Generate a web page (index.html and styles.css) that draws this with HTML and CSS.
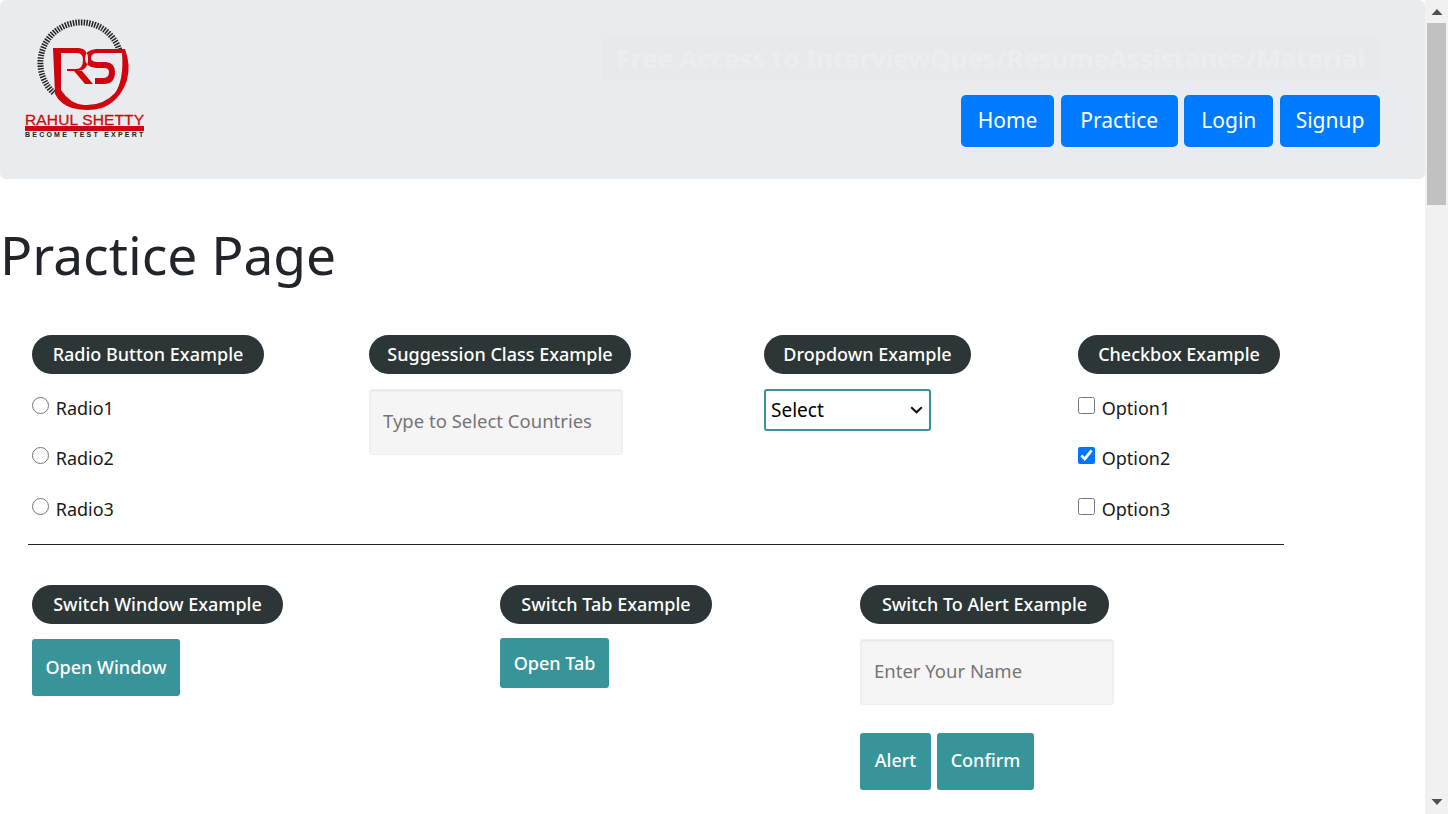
FILE: index.html
```html
<!DOCTYPE html>
<html lang="en">
<head>
  <meta charset="UTF-8">
  <meta name="viewport" content="width=device-width, initial-scale=1.0">
  <title>Practice Page</title>
  <link rel="stylesheet" href="styles.css">
</head>
<body>
  <div class="page">
    <main class="content">
      <header class="jumbotron">
        <div class="logo">
          <svg class="logo-mark" width="120" height="95" viewBox="25 18 120 95">
            <path class="logo-ticks" d="M53.7 92.9A40.5 40.5 0 1 1 119.3 50"/>
            <path class="logo-shield" d="M53 48H79Q88 49 88 59Q88 71 77 71H67V69H76Q83 69 83 60Q83 53 77 53H61V90Q70 104 84 105Q103 106 115 93Q124 80 122 53H98Q91 53 91 58Q91 62 98 62H106Q115 63 115 72Q115 84 104 84H95V78H103Q109 78 109 72Q109 68 104 68H96Q85 67 85 58Q85 50 96 49L125 49Q131 65 127 80Q120 101 102 108Q88 112 72 108Q60 104 55 94Z"/>
            <path class="logo-shield" d="M74 71H82L93 84H85Z"/>
          </svg>
          <div class="logo-name">RAHUL SHETTY</div>
          <div class="logo-bar">ACADEMY</div>
          <div class="logo-tag">BECOME TEST EXPERT</div>
        </div>
        <div class="header-right">
          <div class="promo"><a class="promo-link" href="#">Free Access to InterviewQues/ResumeAssistance/Material</a></div>
          <nav class="nav">
            <a class="nav-btn" href="#">Home</a>
            <a class="nav-btn" href="#">Practice</a>
            <a class="nav-btn" href="#">Login</a>
            <a class="nav-btn" href="#">Signup</a>
          </nav>
        </div>
      </header>

      <h1 class="title">Practice Page</h1>

      <section class="row row-top">
        <div class="col col-radio">
          <div class="legend">Radio Button Example</div>
          <label class="opt"><input type="radio" name="radio"> Radio1</label>
          <label class="opt"><input type="radio" name="radio"> Radio2</label>
          <label class="opt"><input type="radio" name="radio"> Radio3</label>
        </div>
        <div class="col col-suggest">
          <div class="legend">Suggession Class Example</div>
          <input class="field" type="text" placeholder="Type to Select Countries">
        </div>
        <div class="col col-drop">
          <div class="legend">Dropdown Example</div>
          <select class="drop"><option>Select</option></select>
        </div>
        <div class="col col-check">
          <div class="legend">Checkbox Example</div>
          <label class="opt"><input type="checkbox"> Option1</label>
          <label class="opt"><input type="checkbox" checked> Option2</label>
          <label class="opt"><input type="checkbox"> Option3</label>
        </div>
      </section>

      <hr class="rule">

      <section class="row row-bottom">
        <div class="col col-window">
          <div class="legend">Switch Window Example</div>
          <button class="btn btn-window">Open Window</button>
        </div>
        <div class="col col-tab">
          <div class="legend">Switch Tab Example</div>
          <button class="btn btn-tab">Open Tab</button>
        </div>
        <div class="col col-alert">
          <div class="legend">Switch To Alert Example</div>
          <input class="field" type="text" placeholder="Enter Your Name">
          <div class="btn-row">
            <button class="btn btn-alert">Alert</button>
            <button class="btn btn-confirm">Confirm</button>
          </div>
        </div>
      </section>
    </main>

    <div class="scrollbar">
      <svg class="arrow" width="23" height="17" viewBox="0 0 23 17"><path d="M12 9L17.5 15H6.5Z"/></svg>
      <div class="track"><div class="thumb"></div></div>
      <svg class="arrow" width="23" height="17" viewBox="0 0 23 17"><path d="M12 8L6.5 2H17.5Z"/></svg>
    </div>
  </div>
</body>
</html>
```

FILE: styles.css
```css
* {
  box-sizing: border-box;
}
html, body {
  margin: 0;
  height: 100%;
  overflow: hidden;
}
body {
  font-family: "Noto Sans", "Open Sans", sans-serif;
  font-size: 18px;
  color: #212529;
  background: #fff;
}
.page {
  display: flex;
  height: 814px;
}
.content {
  width: 1425px;
  flex: none;
}
.jumbotron {
  height: 179px;
  background: #e9ecef;
  border-radius: 6px;
  display: flex;
  justify-content: space-between;
  padding: 18px 45px 0 25px;
}
.logo {
  width: 120px;
}
.logo-mark {
  display: block;
}
.logo-ticks {
  fill: none;
  stroke: #222;
  stroke-width: 6;
  stroke-dasharray: 1.5 1.2;
}
.logo-shield {
  fill: #d0030f;
  fill-rule: evenodd;
}
.logo-name {
  height: 13px;
  font-family: "Liberation Sans", sans-serif;
  font-size: 15.5px;
  line-height: 13px;
  letter-spacing: .15px;
  color: #cf0a10;
  white-space: nowrap;
  -webkit-text-stroke: .3px #cf0a10;
}
.logo-bar {
  width: 119px;
  height: 5px;
  background: #d0030f;
  font-size: 4px;
  line-height: 5px;
  letter-spacing: 1px;
  text-align: center;
  color: #7a2a2a;
}
.logo-tag {
  margin-top: 1px;
  font-family: "Liberation Sans", sans-serif;
  font-size: 7px;
  font-weight: 700;
  line-height: 6px;
  letter-spacing: 2.22px;
  color: #222;
  white-space: nowrap;
}
.header-right {
  display: flex;
  flex-direction: column;
  align-items: flex-end;
  padding-top: 20px;
}
.promo {
  width: 778px;
  height: 42px;
  background: #e7eaed;
  line-height: 40px;
  text-align: center;
  white-space: nowrap;
  overflow: hidden;
}
.promo-link {
  color: #ebeef1;
  font-size: 25.8px;
  font-weight: 700;
  text-decoration-thickness: 1px;
  text-decoration-color: #e9ecef;
}
.nav {
  display: grid;
  grid-template-columns: 93px 117px 89px 100px;
  gap: 6.67px;
  margin-top: 15px;
}
.nav-btn {
  height: 52px;
  background: #007bff;
  color: #fff;
  font-size: 21px;
  line-height: 50px;
  text-align: center;
  border-radius: 5px;
  text-decoration: none;
}
.title {
  margin: 43px 0 0;
  height: 113px;
  font-size: 53.3px;
  font-weight: 400;
  line-height: 66px;
  color: #212529;
}
.row {
  display: flex;
  padding-left: 32px;
}
.row-top {
  height: 209px;
}
.row-bottom {
  padding-top: 40px;
}
.col-radio { width: 337px; }
.col-suggest { width: 395px; }
.col-drop { width: 314px; }
.col-window { width: 468px; }
.col-tab { width: 360px; }
.legend {
  display: block;
  height: 39px;
  background: #2c3636;
  color: #fff;
  font-size: 18px;
  font-weight: 500;
  line-height: 38px;
  text-align: center;
  border-radius: 20px;
  white-space: nowrap;
}
.col-radio .legend { width: 232px; }
.col-suggest .legend { width: 262px; }
.col-drop .legend { width: 207px; }
.col-check .legend { width: 202px; }
.col-window .legend { width: 251px; }
.col-tab .legend { width: 212px; }
.col-alert .legend { width: 249px; }
.opt {
  display: block;
  height: 50.45px;
  line-height: 24px;
  font-size: 18px;
  color: #1a1a1a;
}
.legend + .opt {
  margin-top: 22px;
}
.opt input {
  width: 17px;
  height: 17px;
  margin: 0 2px 0 0;
  vertical-align: 1px;
}
.field {
  display: block;
  width: 254px;
  height: 66px;
  margin-top: 15px;
  padding: 0 13px 4px;
  background: #f5f5f5;
  border: 1px solid #efefef;
  border-radius: 3px;
  box-shadow: inset 0 1px 2px rgba(0, 0, 0, .08);
  font: inherit;
  font-size: 18.5px;
}
.field::placeholder {
  color: #757575;
}
.drop {
  display: block;
  width: 167px;
  height: 42px;
  margin-top: 15px;
  padding: 0 0 0 5px;
  border: 2px solid #3a9296;
  border-radius: 3px;
  appearance: none;
  background: #fff url("data:image/svg+xml,%3Csvg xmlns='http://www.w3.org/2000/svg' width='13' height='8' viewBox='0 0 13 8'%3E%3Cpath d='M1.2 1.2L6.5 6.3L11.8 1.2' fill='none' stroke='%23111' stroke-width='2'/%3E%3C/svg%3E") no-repeat 144px 15px;
  font: inherit;
  font-size: 19px;
  color: #000;
}
.rule {
  width: 1256px;
  margin: 0 0 0 28px;
  border: 0;
  border-top: 1px solid #222;
}
.btn {
  height: 57px;
  padding: 0;
  background: #37959a;
  border: 0;
  border-radius: 3px;
  color: #fff;
  font: inherit;
  font-size: 18px;
  font-weight: 500;
  white-space: nowrap;
}
.btn-window {
  display: block;
  width: 148px;
  margin-top: 15px;
  padding-bottom: 2px;
}
.btn-tab {
  display: block;
  width: 109px;
  height: 50px;
  margin-top: 14px;
}
.btn-row {
  display: flex;
  gap: 6px;
  margin-top: 28px;
}
.btn-alert {
  width: 71px;
  padding-bottom: 4px;
}
.btn-confirm {
  width: 97px;
  padding-bottom: 4px;
}
.scrollbar {
  width: 23px;
  flex: none;
  display: flex;
  flex-direction: column;
  background: #f1f1f1;
}
.arrow {
  display: block;
  flex: none;
}
.arrow path {
  fill: #505050;
}
.track {
  flex: 1;
  padding: 0 2px;
}
.thumb {
  height: 182px;
  margin-top: 6px;
  background: #c1c1c1;
}
```
